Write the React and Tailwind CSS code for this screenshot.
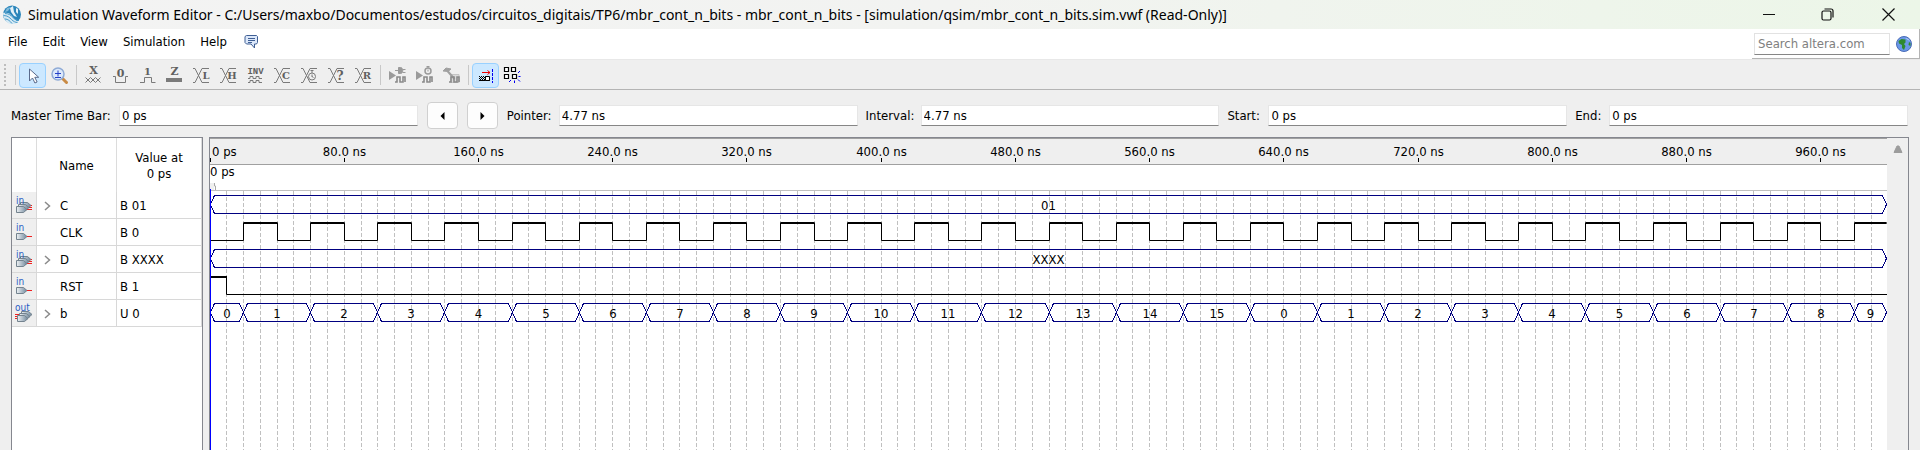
import React, { useLayoutEffect, useRef, useState } from "react";

const UI = "font-['DejaVu_Sans_Condensed','DejaVu_Sans',sans-serif]";
const G = "#7a7a7a";

function Tool({ label, active, children }) {
  return (
    <button
      type="button"
      aria-label={label}
      title={label}
      className={
        active
          ? "flex h-[25px] w-[27px] items-center justify-center rounded-sm border border-[#99d1ff] bg-[#cce8ff]"
          : "flex h-[25px] w-[27px] items-center justify-center rounded-sm border border-transparent"
      }
    >
      <svg width="21" height="21" viewBox="0 0 21 21" fill="none" stroke={G} strokeWidth="1" aria-hidden="true">
        {children}
      </svg>
    </button>
  );
}

function Glyph({ x, y, size = 10, children }) {
  return (
    <text x={x} y={y} fontSize={size} fontWeight="700" fill="#606060" stroke="none" textAnchor="middle" fontFamily="'DejaVu Serif', serif">
      {children}
    </text>
  );
}

const Cross = () => <path d="M2 3.500h2l7 14h7M2 17.500h2l7-14h7" />;

function Separator() {
  return <span className="mx-[3px] h-5 w-px bg-[#c8c8c8]" />;
}

function Pulse({ x, y }) {
  return <path d={`M${x} ${y + 5}h2v-5h3v5h3v-5h2v5`} stroke="#8a8a8a" strokeWidth="1.6" />;
}

function Toolbar() {
  return (
    <div role="toolbar" className="flex h-[29px] items-center border-b border-[#b4b4b4] bg-[#efefef] pl-1">
      <span className="mr-2 h-[22px] w-[3px] border-l-2 border-dotted border-[#bdbdbd]" />
      <span className="mr-[3px] h-5 w-px bg-[#c8c8c8]" />
      <Tool label="Selection tool" active>
        <path d="M7.500 4v12l3-3 2.400 5 2.200-1-2.300-4.700h3.900z" fill="#fff" stroke="#5b6b8c" />
      </Tool>
      <Tool label="Zoom tool">
        <path d="M13.500 13.500l4 4" stroke="#c98b45" strokeWidth="3" strokeLinecap="round" />
        <circle cx="9" cy="9" r="6" fill="#dbe8fb" stroke="#8fabd6" strokeWidth="1.500" />
        <path d="M6 8.500h6M9 5.500v6M6 12.500h6" stroke="#2440c8" />
      </Tool>
      <Separator />
      <Tool label="Forcing unknown">
        <Glyph x={10.5} y={9} size={11}>X</Glyph>
        <path d="M2.500 12.500l5 5 5-5 5 5M2.500 17.500l5-5 5 5 5-5" />
      </Tool>
      <Tool label="Forcing low">
        <Glyph x={10.5} y={12} size={11}>0</Glyph>
        <path d="M3 11.500h2.500v6h10v-6h2.500" />
      </Tool>
      <Tool label="Forcing high">
        <Glyph x={10.5} y={10} size={10}>1</Glyph>
        <path d="M3 17.500h4.500v-5h7v5h4" />
      </Tool>
      <Tool label="High impedance">
        <Glyph x={10.5} y={10} size={11}>Z</Glyph>
        <path d="M2 15h16" strokeWidth="4" />
      </Tool>
      <Tool label="Weak low">
        <Cross />
        <Glyph x={15} y={14} size={10}>L</Glyph>
      </Tool>
      <Tool label="Weak high">
        <Cross />
        <Glyph x={14} y={14} size={10}>H</Glyph>
      </Tool>
      <Tool label="Invert">
        <text x="10.500" y="9" fontSize="9" fontWeight="700" fill="#606060" stroke="none" textAnchor="middle" fontFamily="'Liberation Mono', monospace">INV</text>
        <path d="M3 13.500h2v-2h3v2h3v-2h3v2h3M3 17.500h2v-2h3v2h3v-2h3v2h3" />
      </Tool>
      <Tool label="Count value">
        <Cross />
        <Glyph x={14} y={14} size={10}>C</Glyph>
      </Tool>
      <Tool label="Overwrite clock">
        <Cross />
        <circle cx="13" cy="11.500" r="3.500" fill="#efefef" />
        <path d="M13 8v-2M11.500 5.500h3M13 12V9.500M13 11.500l1.500 1" />
      </Tool>
      <Tool label="Arbitrary value">
        <Cross />
        <Glyph x={14} y={15} size={12}>?</Glyph>
      </Tool>
      <Tool label="Random values">
        <Cross />
        <Glyph x={14} y={14} size={10}>R</Glyph>
      </Tool>
      <Separator />
      <Tool label="Run functional simulation">
        <path d="M2 6v9l7-4.500z" fill="#9a9a9a" stroke="none" />
        <path d="M8 5.500h3M11.500 2.500v6h2c3 0 3-6 0-6zM15.500 4.500h3M15.500 7.500h3" fill="#9a9a9a" stroke="#9a9a9a" />
        <Pulse x={8} y={12} />
      </Tool>
      <Tool label="Run timing simulation">
        <path d="M2 6v9l7-4.500z" fill="#9a9a9a" stroke="none" />
        <circle cx="14" cy="6" r="3" fill="#efefef" stroke="#9a9a9a" strokeWidth="1.500" />
        <path d="M14 3V1M12.500 1.500h3M14 6.500v-2" stroke="#9a9a9a" />
        <Pulse x={8} y={12} />
      </Tool>
      <Tool label="Generate testbench">
        <path d="M10 9.500h8v8h-8z" fill="#dadada" stroke="#c4c4c4" />
        <path d="M2 6l3-3 5 1-3 2.500z" fill="#a0a0a0" stroke="#a0a0a0" />
        <path d="M6.500 6l7 8" stroke="#a0a0a0" strokeWidth="2" />
        <Pulse x={8} y={12} />
      </Tool>
      <Separator />
      <Tool label="Snap to transition" active>
        <path d="M7 7.500h8M12.500 5.500l2.500 2-2.500 2" stroke="#f00000" />
        <path d="M4 11.500h7M5 12.500h7M4 13.500h7M5 14.500h7" stroke="#000" strokeDasharray="1 1" />
        <path d="M4 15.500h11" stroke="#000" />
        <path d="M10.500 11.500h4v4h-4z" fill="#fff" stroke="#000" />
        <path d="M17.500 4v14" stroke="#0000f0" strokeDasharray="3 1" />
      </Tool>
      <Tool label="Snap to grid">
        <path d="M2.500 2.500h4v4h-4zM9.500 2.500h4v4h-4zM2.500 9.500h4v4h-4zM10.500 9.500h4v4h-4z" fill="#fff" stroke="#000" strokeWidth="1.200" />
        <path d="M16 8l2-2M16.500 11.500h2M16 14.500l2 2M12.500 15.500v2.500M9 15l-2 2" stroke="#0000f0" />
      </Tool>
    </div>
  );
}

function TimeField({ id, label, value, labelClass }) {
  return (
    <>
      <label htmlFor={id} className={`shrink-0 whitespace-nowrap ${labelClass}`}>{label}</label>
      <input
        id={id}
        defaultValue={value}
        className="h-[21px] min-w-0 flex-1 border border-[#e6e6e6] border-b-[#868686] bg-white px-[2px]"
      />
    </>
  );
}

function StepButton({ label, d }) {
  return (
    <button
      type="button"
      aria-label={label}
      className="mr-[9px] flex h-[27px] w-[31px] shrink-0 items-center justify-center rounded-sm border border-[#d0d0d0] bg-[#fdfdfd]"
    >
      <svg width="5" height="8" viewBox="0 0 5 8" aria-hidden="true"><path d={d} fill="#000" /></svg>
    </button>
  );
}

function TimeBar() {
  return (
    <div className="flex h-[47px] items-center pt-1 pr-3 pl-[11px]">
      <TimeField id="master" label="Master Time Bar:" value="0 ps" labelClass="w-[108px]" />
      <span className="w-[9px]" />
      <StepButton label="Previous transition" d="M4.500 0v8L.5 4z" />
      <StepButton label="Next transition" d="M.5 0v8l4-4z" />
      <TimeField id="pointer" label="Pointer:" value="4.77 ns" labelClass="w-[52px]" />
      <TimeField id="interval" label="Interval:" value="4.77 ns" labelClass="ml-2 w-[55px]" />
      <TimeField id="start" label="Start:" value="0 ps" labelClass="ml-2 w-[41px]" />
      <TimeField id="end" label="End:" value="0 ps" labelClass="ml-2 w-[34px]" />
    </div>
  );
}

function PinIcon({ kind, bus }) {
  const out = kind === "out";
  const gate = "M1.500 11.500h7l3.500 3-3.500 3h-7z";
  return (
    <svg width="18" height="20" viewBox="0 0 18 20" className="mx-auto" aria-hidden="true">
      <defs>
        <linearGradient id="pin" x1="0" x2="1">
          <stop offset="0" stopColor="#eef1f4" />
          <stop offset="1" stopColor="#6f879b" />
        </linearGradient>
      </defs>
      {out ? (
        <path d="M0 11.500h4M0 13.500h4M0 15.500h4" stroke="#f02020" />
      ) : bus ? (
        <path d="M11 10.500h6M11 12.500h6M11 14.500h6" stroke="#f02020" />
      ) : (
        <path d="M12 14.500h5" stroke="#f02020" />
      )}
      <g transform={out ? "translate(1 1)" : undefined} fill="url(#pin)" stroke="#74838f">
        {bus && <path d={gate} transform="translate(4 -4)" />}
        {bus && <path d={gate} transform="translate(2 -2)" />}
        <path d={gate} />
      </g>
      <text x={out ? 0 : 1} y={out ? 8 : 9} fontSize="10" fill="#2a5cc4" fontFamily="'DejaVu Sans Condensed', 'DejaVu Sans', sans-serif">{kind}</text>
    </svg>
  );
}

const SIGNALS = [
  { name: "C", value: "B 01", kind: "in", bus: true },
  { name: "CLK", value: "B 0", kind: "in" },
  { name: "D", value: "B XXXX", kind: "in", bus: true },
  { name: "RST", value: "B 1", kind: "in" },
  { name: "b", value: "U 0", kind: "out", bus: true },
];

function SignalTable() {
  return (
    <div className="w-[192px] shrink-0 border border-b-0 border-[#85878f] bg-white">
      <table className="w-[190px] table-fixed border-separate border-spacing-0">
        <colgroup>
          <col className="w-[25px]" />
          <col className="w-20" />
          <col className="w-[85px]" />
        </colgroup>
        <thead>
          <tr className="h-[54px]">
            <th className="border-r border-[#dcdcdc] p-0" aria-label="Type" />
            <th className="border-r border-[#dcdcdc] p-0 pt-[2px] text-center font-normal">Name</th>
            <th className="border-r border-[#dcdcdc] p-0 pt-[2px] text-center leading-4 font-normal">Value at<br />0 ps</th>
          </tr>
        </thead>
        <tbody>
          {SIGNALS.map((s) => (
            <tr key={s.name} className="h-[27px]">
              <td className="border-r border-b border-[#d8d8d8] bg-[#efefef] p-0"><PinIcon kind={s.kind} bus={s.bus} /></td>
              <td className="border-r border-b border-[#d8d8d8] p-0 pt-[2px]">
                <div className="flex items-center">
                  <span className="flex w-[23px] justify-center pr-[3px]">
                    {s.bus && (
                      <button type="button" aria-label={`Expand ${s.name}`} className="flex">
                        <svg width="7" height="10" viewBox="0 0 7 10" fill="none" stroke="#8a8a8a" strokeWidth="1.500" aria-hidden="true"><path d="M1 1l4.500 4L1 9" /></svg>
                      </button>
                    )}
                  </span>
                  {s.name}
                </div>
              </td>
              <td className="border-r border-b border-[#d8d8d8] p-0 pt-[2px] pl-[3px]">{s.value}</td>
            </tr>
          ))}
        </tbody>
      </table>
    </div>
  );
}

const END = 1000;
const TICKS = Array.from({ length: 12 }, (_, i) => (i + 1) * 80);
const GRID = Array.from({ length: 99 }, (_, i) => (i + 1) * 10);
const COUNT = [{ from: 0, to: 20, v: 0 }].concat(
  Array.from({ length: 25 }, (_, i) => ({ from: 20 + i * 40, to: Math.min(60 + i * 40, END), v: (i + 1) % 16 }))
);

function Bus({ x, top, segments }) {
  const mid = top + 9;
  const bottom = top + 18;
  return (
    <g>
      {segments.map((s) => {
        const a = x(s.from);
        const b = x(s.to);
        return (
          <g key={s.from}>
            <path
              d={`M${a} ${mid}L${a + 4} ${top}H${b - 4}L${b} ${mid}L${b - 4} ${bottom}H${a + 4}Z`}
              fill="none"
              stroke="#000080"
              shapeRendering="crispEdges"
            />
            <text x={(a + b) / 2} y={mid + 5} textAnchor="middle" fill="#000">{s.v}</text>
          </g>
        );
      })}
    </g>
  );
}

function Waves() {
  const ref = useRef(null);
  const [width, setWidth] = useState(1677);
  useLayoutEffect(() => {
    const measure = () => setWidth(ref.current.clientWidth);
    measure();
    const ro = new ResizeObserver(measure);
    ro.observe(ref.current);
    return () => ro.disconnect();
  }, []);
  const x = (t) => Math.min(Math.floor((t / END) * (width + 1)), width - 1) + 0.5;

  let clk = `M${x(0)} 102.5`;
  for (let t = 20; t < END; t += 40) {
    clk += `H${x(t)}V85H${x(Math.min(t + 20, END))}`;
    if (t + 20 < END) clk += "V102.5";
  }
  return (
    <div ref={ref} className="min-w-0 flex-1 overflow-hidden bg-white">
      <svg width="100%" height="312" fontSize="13" className="block" role="img" aria-label="Simulation waveforms">
        <rect width="100%" height="26" fill="#efefef" />
        <path d={`M0 26.5H${width}`} stroke="#a0a0a0" />
        <path d={`M0 .5H${width}`} stroke="#a0a0a0" />
        <path d="M.5 20v4" stroke="#000" />
        <text x="2" y="18">0 ps</text>
        {TICKS.map((t) => (
          <g key={t}>
            <text x={x(t)} y="18" textAnchor="middle">{t}.0 ns</text>
            <path d={`M${x(t)} 20v4`} stroke="#000" />
          </g>
        ))}
        <text x="0" y="38">0 ps</text>
        <path d="M0 45h4v7H0z" fill="#efefef" />
        <path d="M4.500 45v3h1v4" stroke="#a8a8a8" fill="none" />
        <path d={`M0 52.5H${width}`} stroke="#c0c0c0" />
        {GRID.map((t) => (
          <path key={t} d={`M${x(t)} 53V312`} stroke="#c0c0c0" strokeDasharray="4 2" />
        ))}
        <Bus x={x} top={57.5} segments={[{ from: 0, to: END, v: "01" }]} />
        <path d={clk} fill="none" stroke="#000" />
        {COUNT.slice(1).map((s) => (
          <path key={s.from} d={`M${x(s.from)} 85H${x(Math.min(s.from + 20, END))}`} stroke="#000" strokeWidth="2" />
        ))}
        <Bus x={x} top={111.5} segments={[{ from: 0, to: END, v: "XXXX" }]} />
        <path d={`M0 139H${x(10)}`} stroke="#000" strokeWidth="2" />
        <path d={`M${x(10)} 138V156.5H${width}`} fill="none" stroke="#000" />
        <Bus x={x} top={165.5} segments={COUNT} />
        <path d="M.5 51V312" stroke="#0000ff" />
      </svg>
    </div>
  );
}

export default function App() {
  return (
    <div className={`flex h-screen flex-col overflow-hidden bg-[#efefef] text-[13px] text-black ${UI}`}>
      <header className="flex h-[29px] shrink-0 items-center bg-linear-to-r from-[#f3f3f3] via-[#f2f3f1] to-[#ecf6e8] pl-[2px] font-['Noto_Sans',sans-serif]">
        <svg width="20" height="20" viewBox="0 0 20 20" aria-hidden="true">
          <circle cx="10" cy="9.500" r="9" fill="#2c86bb" />
          <path d="M1 8c4-1 7 0 9 3s4 5 7 6c-3 2-8 3-11 1S1 12 1 8z" fill="#d5e9f4" />
          <path d="M1.500 10.500c4 0 6 2 8 4s4 3 6 3M3 14c3 0 5 2 7 4.500M3 8.500c4 0 6 2 8 4s4 3 6 3" fill="none" stroke="#4b9cca" />
          <path d="M8 3l3-2 1 6 3 5-3-1-3-4zM14 3l2 1v5l-2-2z" fill="#e4f1f8" />
          <path d="M5 3l4-1-3 4-3 1z" fill="#7fbadb" />
        </svg>
        <h1 className="ml-[6px] truncate text-[14px]">
          Simulation Waveform Editor - C:/Users/maxbo/Documentos/estudos/circuitos_digitais/TP6/mbr_cont_n_bits - mbr_cont_n_bits - [simulation/qsim/mbr_cont_n_bits.sim.vwf (Read-Only)]
        </h1>
        <div className="ml-auto flex">
          <button type="button" aria-label="Minimize" className="flex h-7 w-[58px] items-center justify-center">
            <svg width="12" height="12" stroke="#111"><path d="M0 5.500h12" /></svg>
          </button>
          <button type="button" aria-label="Restore" className="flex h-7 w-[58px] items-center justify-center">
            <svg width="13" height="13" fill="none" stroke="#111" strokeWidth="1.200"><rect x="1" y="3" width="9" height="9" rx="1.500" /><path d="M3.500 1h6.500a2 2 0 0 1 2 2v6.500" /></svg>
          </button>
          <button type="button" aria-label="Close" className="flex h-7 w-16 items-center justify-center">
            <svg width="13" height="13" stroke="#111" strokeWidth="1.200"><path d="M.5 .5l12 12M12.500 .5l-12 12" /></svg>
          </button>
        </div>
      </header>

      <div className="flex h-[31px] shrink-0 items-start justify-between border-b border-[#e8e8e8] bg-white">
        <nav className="flex h-[25px] items-center gap-[15px] pl-2">
          {["File", "Edit", "View", "Simulation", "Help"].map((m) => (
            <button key={m} type="button">{m}</button>
          ))}
          <button type="button" aria-label="Feedback">
            <svg width="15" height="14" viewBox="0 0 15 14" className="ml-[2px]" aria-hidden="true">
              <path d="M2.500 .5h10l1 1v6l-1 1.500h-2v4L7 9H2.500L1 7.500v-6z" fill="#dce8fa" stroke="#3f5f94" />
              <path d="M4 3.500h7M4 5.500h7M4 7.500h4" stroke="#3f5f94" />
            </svg>
          </button>
        </nav>
        <div className="flex h-[30px] items-center gap-[6px] border-r border-b border-[#b4b4b4] pr-[7px] pl-[2px]">
          <input
            aria-label="Search altera.com"
            placeholder="Search altera.com"
            className="h-[22px] w-[136px] border border-[#e2e2e2] border-b-[#868686] bg-white px-[3px] placeholder:text-[#808080]"
          />
          <button type="button" aria-label="Search the web">
            <svg width="16" height="16" viewBox="0 0 16 16" className="block" aria-hidden="true">
              <circle cx="8" cy="8" r="7.500" fill="#6a98e6" stroke="#4a6cb8" />
              <path d="M2.500 5l3-2 4 .5v3L8 8l1.500 2-1.500 4-2-2V9L3 7.500zM13 6l1.500 1v3l-2-1z" fill="#2f8a2f" />
              <path d="M9 2c2 0 4 1 5 3l-2-1z" fill="#b9d2fa" />
            </svg>
          </button>
        </div>
      </div>

      <div className="shrink-0 pt-px"><Toolbar /></div>
      <div className="shrink-0"><TimeBar /></div>

      <main className="flex min-h-0 flex-1 gap-[6px] pr-[11px] pl-[11px]">
        <SignalTable />
        <section className="flex min-w-0 flex-1 border border-b-0 border-[#85878f]">
          <Waves />
          <div className="flex w-[21px] shrink-0 justify-center bg-[#efefef] pt-[7px]">
            <svg width="10" height="8" aria-hidden="true"><path d="M1 7.500L4 1h2l3 6.500z" fill="#9c9c9c" stroke="#9c9c9c" /></svg>
          </div>
        </section>
      </main>
    </div>
  );
}
